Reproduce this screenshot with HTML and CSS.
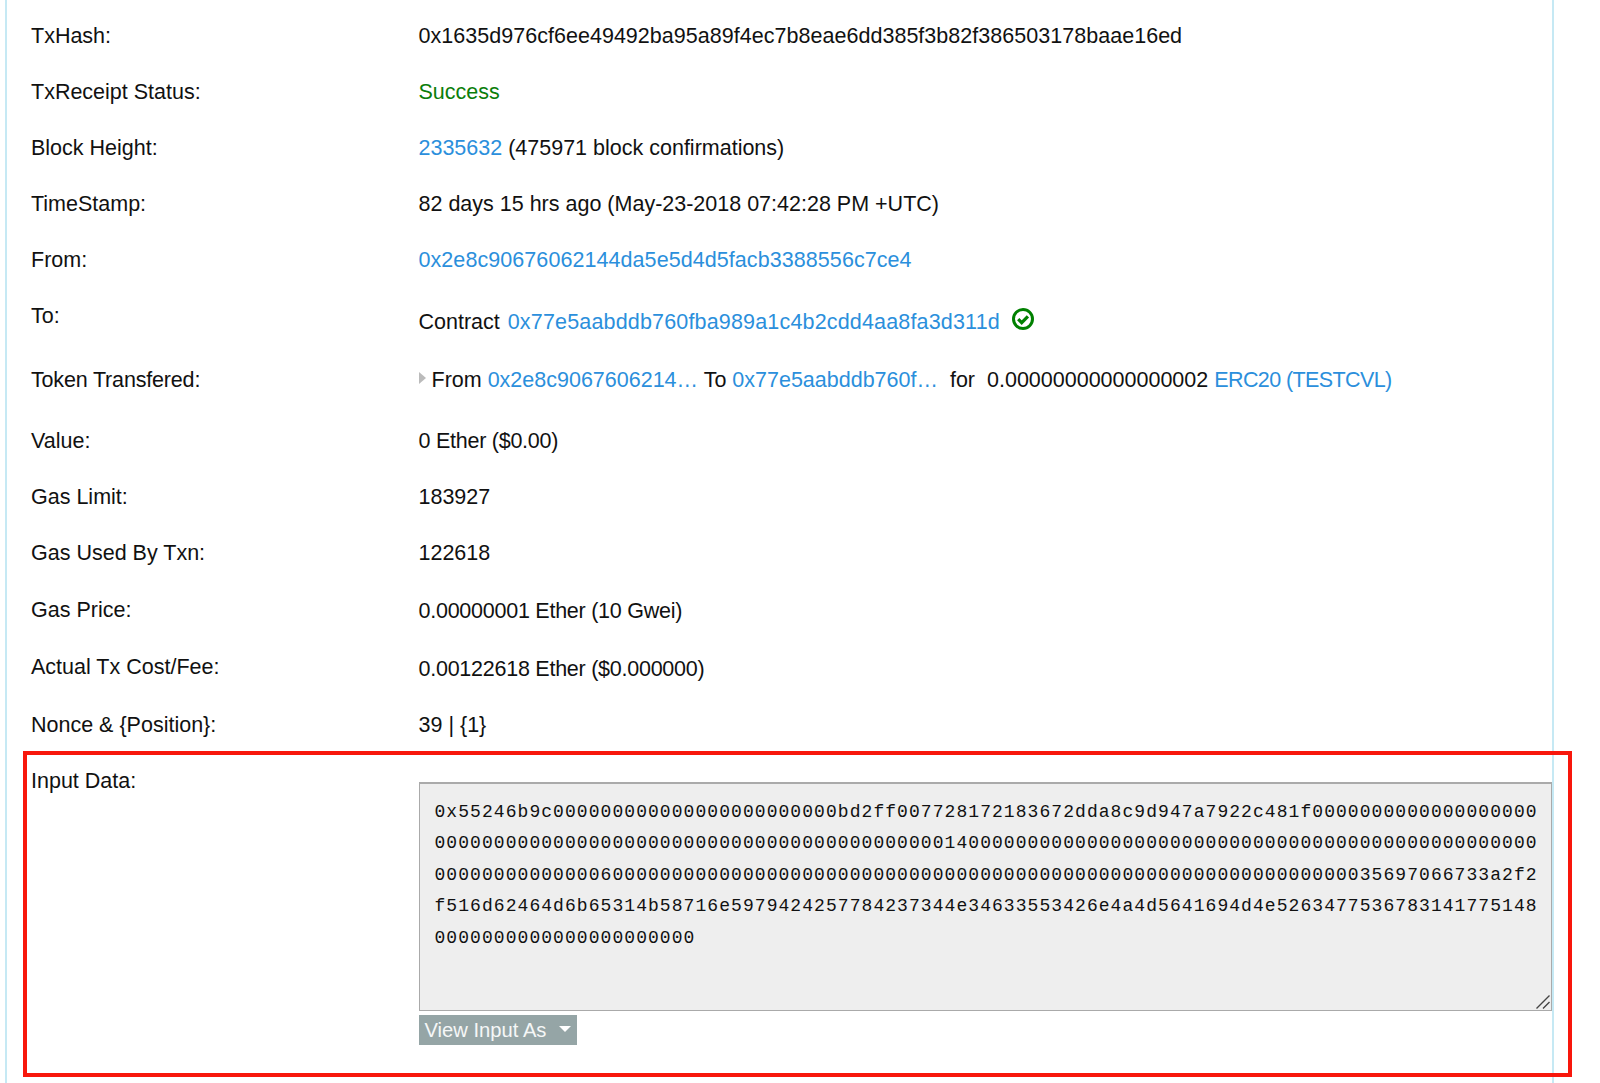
FILE: index.html
```html
<!DOCTYPE html>
<html lang="en">
<head>
<meta charset="utf-8">
<title>Transaction details</title>
<link rel="stylesheet" href="styles.css">
</head>
<body>
<main class="panel">
  <div class="row"><div class="label">TxHash:</div><div class="value hash">0x1635d976cf6ee49492ba95a89f4ec7b8eae6dd385f3b82f386503178baae16ed</div></div>
  <div class="row"><div class="label">TxReceipt Status:</div><div class="value success">Success</div></div>
  <div class="row"><div class="label">Block Height:</div><div class="value"><a href="#">2335632</a> (475971 block confirmations)</div></div>
  <div class="row"><div class="label">TimeStamp:</div><div class="value">82 days 15 hrs ago (May-23-2018 07:42:28 PM +UTC)</div></div>
  <div class="row"><div class="label">From:</div><div class="value"><a class="addr-from" href="#">0x2e8c90676062144da5e5d4d5facb3388556c7ce4</a></div></div>
  <div class="row row-to"><div class="label">To:</div><div class="value value-to">Contract <a class="addr-to" href="#">0x77e5aabddb760fba989a1c4b2cdd4aa8fa3d311d</a>
    <svg class="verified" viewBox="0 0 22 22" aria-hidden="true"><circle cx="11" cy="11" r="9.5" fill="none" stroke="#008000" stroke-width="3"/><path d="M6.2 11.2l3.5 3.5 6.2-6.3" fill="none" stroke="#008000" stroke-width="3.2"/></svg></div></div>
  <div class="row row-token"><div class="label label-token">Token Transfered:</div><div class="value token"><span class="arrow"></span>From <a href="#">0x2e8c9067606214…</a> To <a href="#">0x77e5aabddb760f…</a> <span class="for">for</span> <span class="for">0.00000000000000002</span> <a class="erc" href="#">ERC20 (TESTCVL)</a></div></div>
  <div class="row"><div class="label">Value:</div><div class="value tight">0 Ether ($0.00)</div></div>
  <div class="row"><div class="label">Gas Limit:</div><div class="value">183927</div></div>
  <div class="row row-used"><div class="label">Gas Used By Txn:</div><div class="value">122618</div></div>
  <div class="row row-used"><div class="label">Gas Price:</div><div class="value value-nudge tight">0.00000001 Ether (10 Gwei)</div></div>
  <div class="row row-fee"><div class="label">Actual Tx Cost/Fee:</div><div class="value value-nudge-more tight">0.00122618 Ether ($0.000000)</div></div>
  <div class="row"><div class="label">Nonce &amp; {Position}:</div><div class="value">39 | {1}</div></div>
  <div class="row row-input">
    <div class="label">Input Data:</div>
    <div class="value input-col">
      <div class="input-box">
        <div class="code">0x55246b9c000000000000000000000000bd2ff007728172183672dda8c9d947a7922c481f0000000000000000000
000000000000000000000000000000000000000000014000000000000000000000000000000000000000000000000
00000000000000600000000000000000000000000000000000000000000000000000000000000035697066733a2f2
f516d62464d6b65314b58716e5979424257784237344e34633553426e4a4d5641694d4e5263477536783141775148
0000000000000000000000</div>
        <svg class="grip" viewBox="0 0 14 14" aria-hidden="true"><path d="M0.5 13.5L13.5 0.5M7 13.5l6.5-6.5" fill="none" stroke="#444" stroke-width="1.4"/></svg>
      </div>
      <button class="view-btn" type="button">View Input As<span class="caret"></span></button>
    </div>
  </div>
</main>
<div class="highlight"></div>
</body>
</html>
```

FILE: styles.css
```css
* { box-sizing: border-box; }
html, body { margin: 0; padding: 0; background: #fff; }
body {
  font-family: "Liberation Sans", Arial, sans-serif;
  font-size: 21.5px;
  color: #111;
  height: 1083px;
  overflow: hidden;
  position: relative;
}
a { color: #2b8fdc; text-decoration: none; }
.panel {
  margin-left: 5px;
  width: 1549px;
  height: 1083px;
  border-left: 2px solid #c6e9f4;
  border-right: 2px solid #c6e9f4;
  padding-top: 8px;
}
.row {
  display: flex;
  height: 56px;
  padding-left: 24px;
  line-height: 56px;
}
.label { width: 387.5px; flex: none; line-height: 56px; height: 56px; }
.label-token { letter-spacing: -0.17px; }
.value { flex: 1; min-width: 0; white-space: nowrap; }
.hash { letter-spacing: 0.03px; }
.tight { letter-spacing: -0.25px; }
.addr-from { letter-spacing: 0.07px; }
.addr-to { letter-spacing: 0.17px; margin-left: 2px; }
.erc { letter-spacing: -0.6px; }
.success { color: #0a7d0a; }
.row-to { height: 64px; }
.value-to { line-height: 68px; display: flex; align-items: center; height: 68px; white-space: pre; }
.verified { width: 22px; height: 22px; margin: -6px 0 0 12px; }
.row-token { height: 61px; }
.token { line-height: 56px; }
.arrow {
  display: inline-block;
  width: 0; height: 0;
  border-left: 7px solid #bbb;
  border-top: 6px solid transparent;
  border-bottom: 6px solid transparent;
  margin-right: 6px;
  vertical-align: 3px;
}
.for { margin-left: 6px; }
.row-used { height: 57px; }
.row-fee { height: 58px; }
.value-nudge { line-height: 58px; }
.value-nudge-more { line-height: 60px; }
.row-input { height: auto; }
.input-col { display: flex; flex-direction: column; align-items: flex-start; padding-top: 29px; line-height: normal; }
.input-box {
  position: relative;
  width: 100%;
  height: 229px;
  background: #eee;
  border: 1px solid #aaa;
  border-top-width: 2px;
  padding: 13px 15px;
}
.code {
  font-family: "Liberation Mono", "Courier New", monospace;
  font-size: 18px;
  letter-spacing: 1.06px;
  line-height: 31.4px;
  color: #111;
  white-space: pre;
}
.grip { position: absolute; right: 1px; bottom: 1px; width: 14px; height: 14px; }
.view-btn {
  display: flex;
  align-items: center;
  margin-top: 4px;
  width: 158px;
  height: 30px;
  padding: 0 0 0 6px;
  background: #95a5a6;
  border: 0;
  color: #f5f7f7;
  font-family: inherit;
  font-size: 20.2px;
}
.caret {
  width: 0; height: 0;
  margin: -2px 0 0 13px;
  border-top: 6px solid #fff;
  border-left: 6px solid transparent;
  border-right: 6px solid transparent;
}
.highlight {
  position: absolute;
  left: 23px;
  top: 751px;
  width: 1549px;
  height: 326px;
  border: 4px solid #f8170c;
  pointer-events: none;
}
```
